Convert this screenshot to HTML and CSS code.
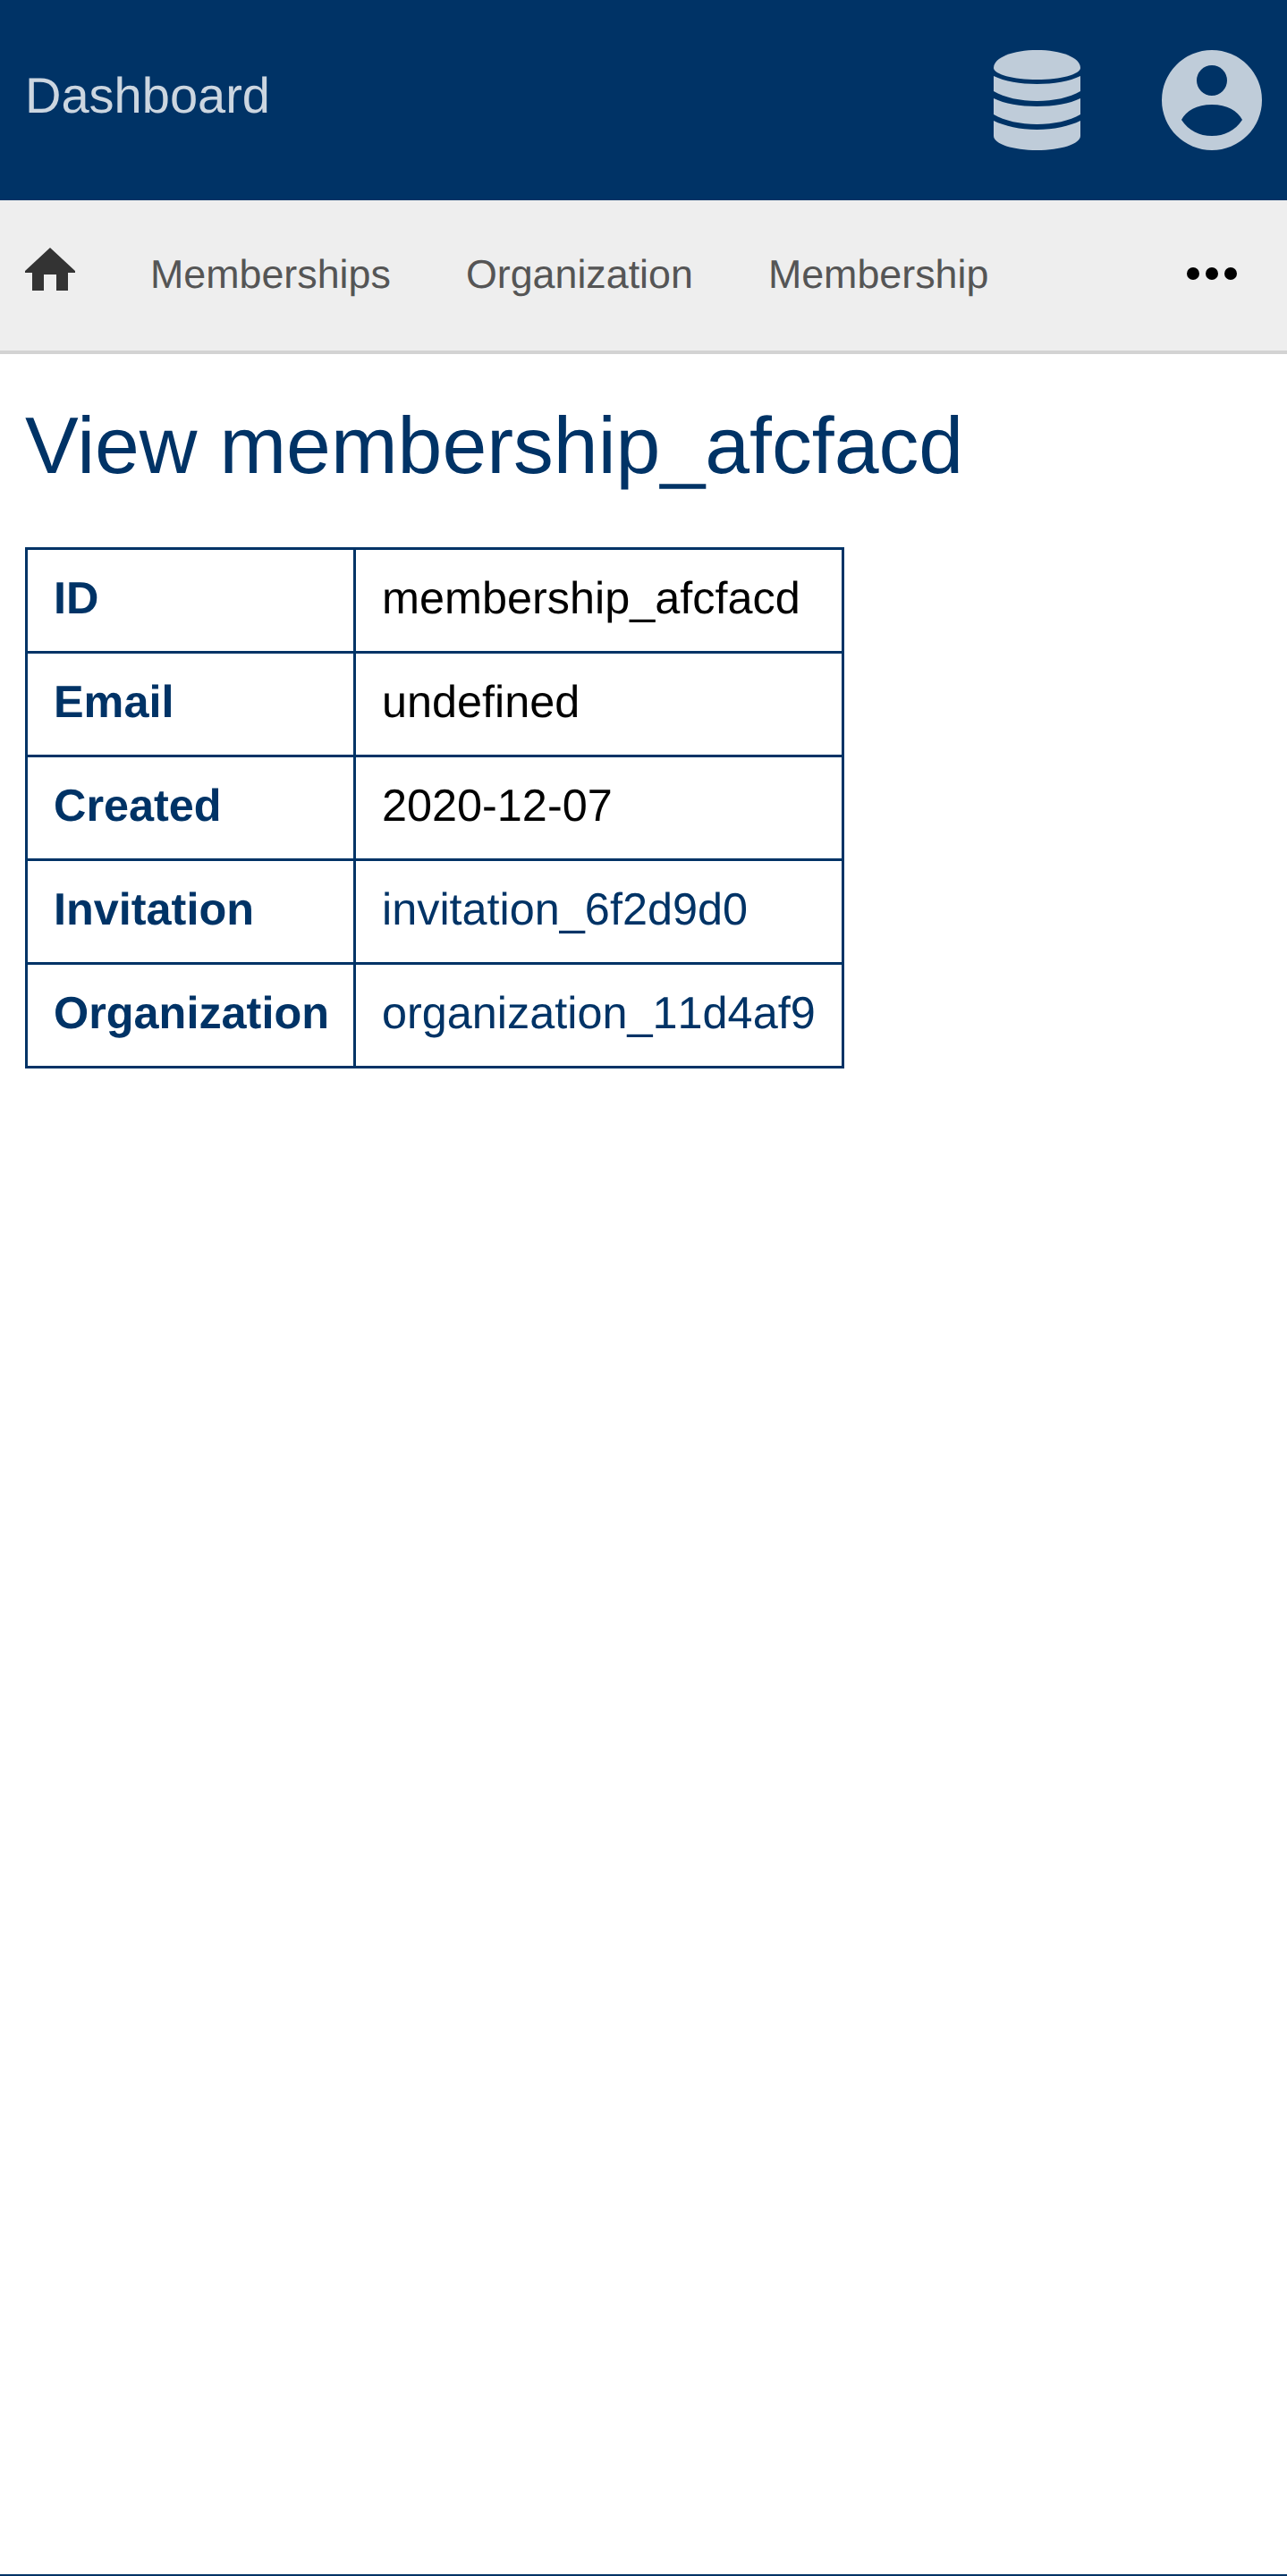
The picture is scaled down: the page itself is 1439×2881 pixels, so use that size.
FILE: index.html
```html
<!DOCTYPE html>
<html lang="en">
<head>
<meta charset="utf-8">
<title>View membership_afcfacd</title>
<link rel="stylesheet" href="styles.css">
</head>
<body>
<header class="topbar">
  <a class="brand" href="#">Dashboard</a>
  <div class="top-icons">
    <svg class="icon-db" viewBox="0 0 97 112" aria-hidden="true"><path d="M48.500 0C75 0 97 8 97 20C97 27 75 33 48.500 33C22 33 0 27 0 20C0 8 22 0 48.500 0Z"/><path d="M0 29C12 35 30 38 48.500 38C67 38 85 35 97 29V46C85 53 67 57 48.500 57C30 57 12 53 0 46Z"/><path d="M0 54C12 60 30 63 48.500 63C67 63 85 60 97 54V72C85 79 67 83 48.500 83C30 83 12 79 0 72Z"/><path d="M0 79C12 85 30 89 48.500 89C67 89 85 85 97 79V96C97 105 75 112 48.500 112C22 112 0 105 0 96Z"/></svg>
    <svg class="icon-user" viewBox="0 0 112 112" aria-hidden="true"><path fill-rule="evenodd" d="M56 0A56 56 0 1 1 56 112A56 56 0 1 1 56 0ZM56 17A17 17 0 1 0 56 51A17 17 0 1 0 56 17ZM56 61C39 61 27 68 22 78C30 90 42 96 56 96C70 96 82 90 90 78C85 68 73 61 56 61Z"/></svg>
  </div>
</header>
<nav class="navbar">
  <a class="home" href="#" aria-label="Home"><svg viewBox="0 0 56 48" aria-hidden="true"><path d="M28 0L56 26V28H48V48H35V30H21V48H8V28H0V26Z"/></svg></a>
  <a class="nav-link" href="#">Memberships</a>
  <a class="nav-link" href="#">Organization</a>
  <a class="nav-link" href="#">Membership</a>
  <button class="more" aria-label="More"><span></span><span></span><span></span></button>
</nav>
<main class="content">
  <h1 class="title">View membership_afcfacd</h1>
  <table class="detail">
    <tbody>
      <tr><th>ID</th><td>membership_afcfacd</td></tr>
      <tr><th>Email</th><td>undefined</td></tr>
      <tr><th>Created</th><td>2020-12-07</td></tr>
      <tr><th>Invitation</th><td><a href="#">invitation_6f2d9d0</a></td></tr>
      <tr><th>Organization</th><td><a href="#">organization_11d4af9</a></td></tr>
    </tbody>
  </table>
</main>
<footer class="footer"></footer>
</body>
</html>
```
FILE: styles.css
```css
* { box-sizing: border-box; }
html, body { margin: 0; padding: 0; }
body {
  min-height: 2881px;
  display: flex;
  flex-direction: column;
  font-family: "Liberation Sans", Arial, sans-serif;
  background: #fff;
  color: #000;
  text-rendering: geometricPrecision;
}
a { text-decoration: none; }
.topbar {
  height: 224px;
  background: #036;
  display: flex;
  align-items: center;
  justify-content: space-between;
  padding: 0 28.500px 0 28px;
}
.brand {
  color: #ccd6e0;
  font-size: 56px;
  line-height: 1;
  margin-top: -10px;
}
.top-icons {
  display: flex;
  align-items: center;
  gap: 91px;
}
.top-icons svg { height: 112px; display: block; fill: #bfccd9; }
.icon-db { width: 97px; }
.icon-user { width: 112px; }
.navbar {
  height: 172px;
  background: #eee;
  border-bottom: 4px solid #d3d3d3;
  display: flex;
  align-items: center;
  padding: 0 56px 0 28px;
}
.home { display: block; width: 56px; height: 48px; margin: -15px 84px 0 0; }
.home svg { display: block; width: 56px; height: 48px; fill: #333; }
.nav-link {
  color: #555;
  font-size: 44.8px;
  margin-right: 84px;
  line-height: 1;
  margin-top: -1px;
}
.more {
  margin-left: auto;
  display: flex;
  gap: 7px;
  padding: 0;
  border: 0;
  background: none;
  margin-top: -4px;
}
.more span { width: 14px; height: 14px; border-radius: 50%; background: #000; }
.content { flex: 1; padding: 0 28px; }
.title {
  margin: 51px 0 62px;
  color: #036;
  font-size: 89.6px;
  font-weight: 400;
  line-height: 1.15;
}
.detail {
  border-collapse: collapse;
  font-size: 50.4px;
  font-kerning: none;
  border: 3px solid #036;
}
.detail th, .detail td {
  border: 3px solid #036;
  padding: 25px 29px 30px;
  text-align: left;
  line-height: 58px;
  white-space: nowrap;
}
.detail th { color: #036; font-weight: 700; padding-right: 27px; }
.detail a { color: #036; }
.footer { height: 2px; background: #036; }
```
